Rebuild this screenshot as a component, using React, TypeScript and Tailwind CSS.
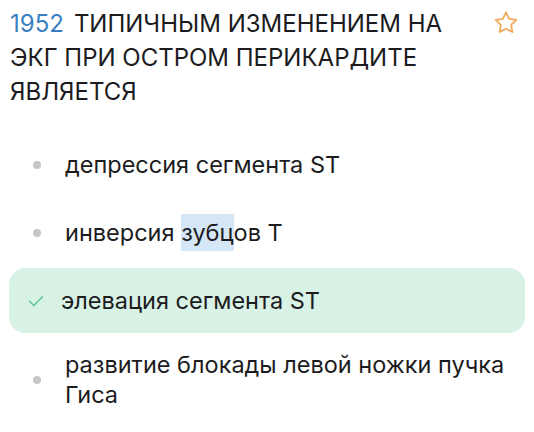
import React from 'react';

type Answer = {
  text: string;
  correct?: boolean;
};

const answers: Answer[] = [
  { text: 'депрессия сегмента ST' },
  { text: 'инверсия зубцов T' },
  { text: 'элевация сегмента ST', correct: true },
  { text: 'развитие блокады левой ножки пучка Гиса' },
];

const StarIcon = () => (
  <svg width="28" height="28" viewBox="0 0 24 24" fill="none" stroke="#f2a95a" strokeWidth="1.5" strokeLinejoin="round">
    <path d="M12 2.8l2.75 5.6 6.15.9-4.45 4.35 1.05 6.1L12 16.85l-5.5 2.9 1.05-6.1L3.1 9.3l6.15-.9L12 2.8z" />
  </svg>
);

const CheckIcon = () => (
  <svg width="16" height="12" viewBox="0 0 16 12" fill="none" stroke="#5cc78c" strokeWidth="1.5" strokeLinecap="round" strokeLinejoin="round">
    <path d="M1.5 6.2l4.3 4.3L14.5 1.8" />
  </svg>
);

const AnswerText = ({ text }: { text: string }) => {
  // the word "зубцов" is partly selected
  if (text === 'инверсия зубцов T') {
    return (
      <>
        инверсия <span className="bg-[#d5e6f7] py-[4px]">зубц</span>ов T
      </>
    );
  }
  return <>{text}</>;
};

export default function App() {
  return (
    <div className="w-[534px] h-[432px] overflow-hidden bg-white px-[9px] pt-[7px] font-['Inter',sans-serif] text-[#1c1c1e]">
      <div className="flex items-start">
        <p className="flex-1 pr-[30px] pl-[1px] text-[24px] leading-[34px]">
          <span className="text-[#3a7fc1] mr-[10px]">1952</span>
          ТИПИЧНЫМ ИЗМЕНЕНИЕМ НА ЭКГ ПРИ ОСТРОМ ПЕРИКАРДИТЕ ЯВЛЯЕТСЯ
        </p>
        <div className="pt-[2px] pr-[5px]">
          <StarIcon />
        </div>
      </div>

      <ul className="mt-[23px] flex flex-col gap-[3px]">
        {answers.map((a, i) => (
          <li
            key={i}
            className={
              a.correct
                ? 'flex items-center min-h-[65px] py-[14px] rounded-[16px] bg-[#d8f2e6]'
                : 'flex items-center min-h-[65px] py-[14px] rounded-[16px]'
            }
          >
            <div className="w-[52px] shrink-0 flex justify-center">
              {a.correct ? (
                <div className="pl-[1px]">
                  <CheckIcon />
                </div>
              ) : (
                <div className="w-[8px] h-[8px] rounded-full bg-[#c6c6c8] ml-[3px]" />
              )}
            </div>
            <span className={a.correct ? 'text-[23.5px] leading-[30px]' : 'text-[23.5px] leading-[30px] pl-[4px]'}>
              <AnswerText text={a.text} />
            </span>
          </li>
        ))}
      </ul>
    </div>
  );
}
